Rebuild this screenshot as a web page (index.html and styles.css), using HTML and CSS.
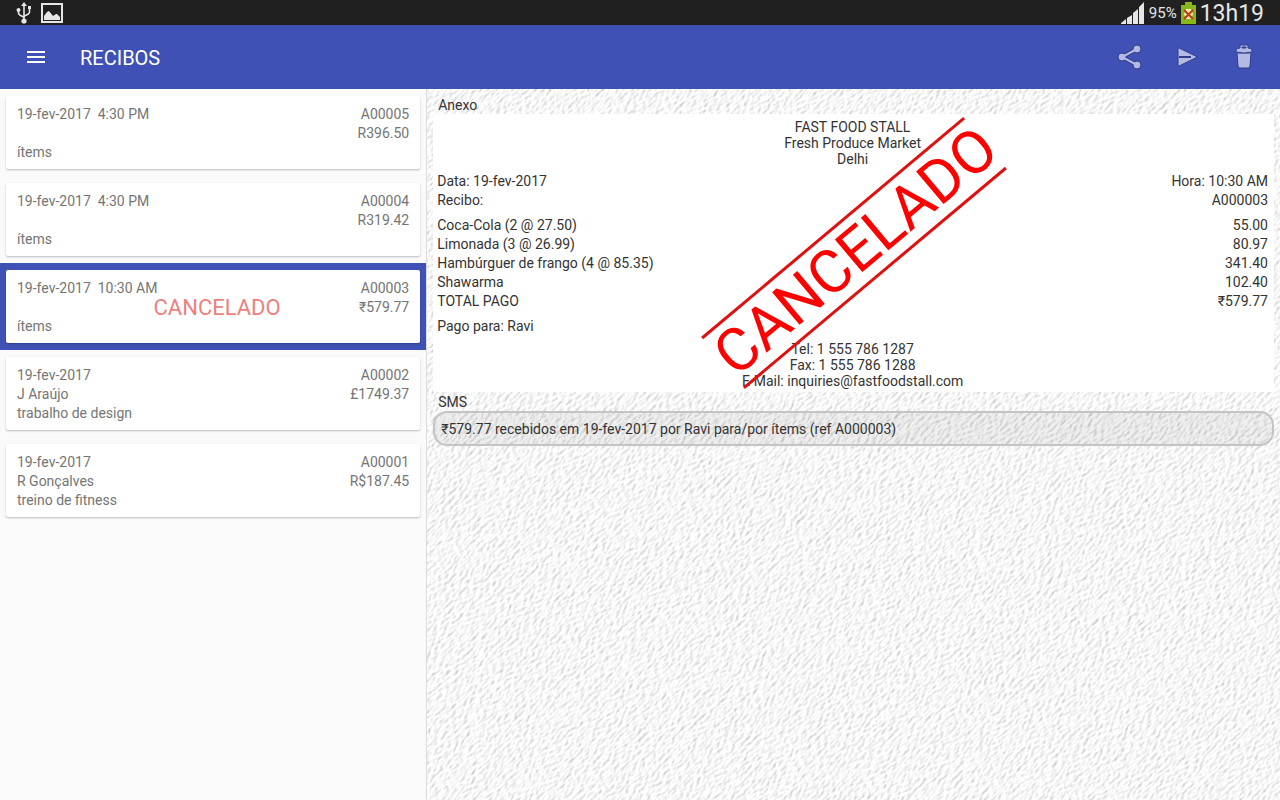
FILE: index.html
```html
<!DOCTYPE html>
<html lang="pt">
<head>
  <meta charset="UTF-8">
  <meta name="viewport" content="width=device-width, initial-scale=1.0">
  <title>Recibos</title>
  <link rel="stylesheet" href="styles.css">
</head>
<body>
  <div class="status-bar">
    <div class="status-group">
      <svg width="16" height="22" viewBox="0 0 16 22" fill="none" stroke="#e6e6e6" stroke-width="1.6">
        <path d="M8 4v14M2.5 8v3c0 3 5.5 3 5.5 5M13.5 7v3c0 3-5.500 3-5.500 5"/>
        <path d="M8 0l3 4H5zM12 4h3v3h-3z" fill="#e6e6e6" stroke="none"/>
        <circle cx="2.500" cy="8" r="2" fill="#e6e6e6" stroke="none"/>
        <circle cx="8" cy="19" r="2.600" fill="#e6e6e6" stroke="none"/>
      </svg>
      <svg width="22" height="20" viewBox="0 0 22 20">
        <rect x="1" y="1" width="20" height="18" fill="none" stroke="#e6e6e6" stroke-width="2"/>
        <path d="M3 17v-4l3-4 2-1 4 5 3-2h1l3 3v3z" fill="#e6e6e6"/>
      </svg>
    </div>
    <div class="status-group status-right">
      <svg width="24" height="22" viewBox="0 0 24 22" fill="#e6e6e6">
        <path d="M0 22v-1l5-4v5zM6 22v-6l5-3v9zM12 22V11l5-4v15zM18 22V5l5-5v22z"/>
      </svg>
      <span class="battery-level">95%</span>
      <svg width="15" height="22" viewBox="0 0 15 22">
        <path d="M0 3h4V0h7v3h4v19H0z" fill="#86b81b"/>
        <path d="M5 7h5l2 5-2 5H5l-2-5z" fill="#f5e9b8"/>
        <path d="M3 8l9 9M12 8l-9 9" stroke="#c03a12" stroke-width="2"/>
      </svg>
      <span class="clock">13h19</span>
    </div>
  </div>

  <header class="app-bar">
    <button class="icon-button" aria-label="Menu">
      <svg width="18" height="12" viewBox="0 0 18 12" fill="#ffffff">
        <path d="M0 0h18v2H0zM0 5h18v2H0zM0 10h18v2H0z"/>
      </svg>
    </button>
    <h1>RECIBOS</h1>
    <div class="actions">
      <button class="icon-button" aria-label="Compartilhar">
        <svg width="26" height="26" viewBox="0 0 26 26">
          <path d="M20 5L5 13l15 8" fill="none" stroke="#303c8c" stroke-width="4"/>
          <g fill="#b4bae4" stroke="#303c8c" stroke-width="1">
            <circle cx="20" cy="5" r="4"/>
            <circle cx="5" cy="13" r="4"/>
            <circle cx="20" cy="21" r="4"/>
          </g>
          <path d="M20 5L5 13l15 8" fill="none" stroke="#b4bae4" stroke-width="2"/>
        </svg>
      </button>
      <button class="icon-button" aria-label="Enviar">
        <svg width="22" height="22" viewBox="0 0 22 22">
          <path d="M2 1.500L21.500 11 2 20.500z" fill="#b4bae4" stroke="#303c8c" stroke-width="1"/>
          <path d="M3 11h12" stroke="#303c8c" stroke-width="2"/>
        </svg>
      </button>
      <button class="icon-button" aria-label="Excluir">
        <svg width="18" height="26" viewBox="0 0 18 26" fill="#b4bae4" stroke="#303c8c" stroke-width="1">
          <path d="M2 9h14l-1 13q0 2-2 2H5q-2 0-2-2z"/>
          <path d="M1 8V6q1-2 4-2V1h8v3q3 0 4 2v2q-8 2-16 0zM7 4h4V3H7z" fill-rule="evenodd"/>
        </svg>
      </button>
    </div>
  </header>

  <main class="content">
    <ul class="receipt-list">
      <li class="list-item">
        <button class="card">
          <span class="card-row"><span>19-fev-2017&nbsp; 4:30 PM</span><span>A00005</span></span>
          <span class="card-row"><span></span><span>R396.50</span></span>
          <span class="card-row"><span>ítems</span></span>
        </button>
      </li>
      <li class="list-item">
        <button class="card">
          <span class="card-row"><span>19-fev-2017&nbsp; 4:30 PM</span><span>A00004</span></span>
          <span class="card-row"><span></span><span>R319.42</span></span>
          <span class="card-row"><span>ítems</span></span>
        </button>
      </li>
      <li class="list-item selected">
        <button class="card">
          <span class="card-row"><span>19-fev-2017&nbsp; 10:30 AM</span><span>A00003</span></span>
          <span class="card-row"><span></span><span>₹579.77</span></span>
          <span class="card-row"><span>ítems</span></span>
          <span class="card-stamp">CANCELADO</span>
        </button>
      </li>
      <li class="list-item">
        <button class="card">
          <span class="card-row"><span>19-fev-2017</span><span>A00002</span></span>
          <span class="card-row"><span>J Araújo</span><span>£1749.37</span></span>
          <span class="card-row"><span>trabalho de design</span></span>
        </button>
      </li>
      <li class="list-item">
        <button class="card">
          <span class="card-row"><span>19-fev-2017</span><span>A00001</span></span>
          <span class="card-row"><span>R Gonçalves</span><span>R$187.45</span></span>
          <span class="card-row"><span>treino de fitness</span></span>
        </button>
      </li>
    </ul>

    <section class="detail">
      <!-- rough paper background -->
      <svg class="paper" width="100%" height="100%" aria-hidden="true">
        <filter id="paper" x="0" y="0" width="100%" height="100%" color-interpolation-filters="sRGB">
          <feTurbulence type="fractalNoise" baseFrequency="0.18 0.36" numOctaves="4" seed="4" result="noise"/>
          <feDiffuseLighting in="noise" surfaceScale="0.6" diffuseConstant="1.150" lighting-color="#ffffff">
            <feDistantLight azimuth="250" elevation="58"/>
          </feDiffuseLighting>
        </filter>
        <g transform="rotate(-45)">
          <rect x="-800" y="-100" width="2000" height="1600" filter="url(#paper)"/>
        </g>
      </svg>

      <h2>Anexo</h2>
      <div class="receipt">
        <div class="centered">
          <p>FAST FOOD STALL</p>
          <p>Fresh Produce Market</p>
          <p>Delhi</p>
        </div>
        <table>
          <tr><td>Data: 19-fev-2017</td><td>Hora: 10:30 AM</td></tr>
          <tr><td>Recibo:</td><td>A000003</td></tr>
        </table>
        <table>
          <tr><td>Coca-Cola (2 @ 27.50)</td><td>55.00</td></tr>
          <tr><td>Limonada (3 @ 26.99)</td><td>80.97</td></tr>
          <tr><td>Hambúrguer de frango (4 @ 85.35)</td><td>341.40</td></tr>
          <tr><td>Shawarma</td><td>102.40</td></tr>
          <tr><td>TOTAL PAGO</td><td>₹579.77</td></tr>
        </table>
        <p class="paid-by">Pago para: Ravi</p>
        <div class="centered">
          <p>Tel: 1 555 786 1287</p>
          <p>Fax: 1 555 786 1288</p>
          <p>E-Mail: inquiries@fastfoodstall.com</p>
        </div>
        <div class="stamp"><span>CANCELADO</span></div>
      </div>
      <h2>SMS</h2>
      <p class="sms">₹579.77 recebidos em 19-fev-2017 por Ravi para/por ítems (ref A000003)</p>
    </section>
  </main>
</body>
</html>
```

FILE: styles.css
```css
* {
  box-sizing: border-box;
}

body {
  margin: 0;
  min-height: 100vh;
  display: flex;
  flex-direction: column;
  font-family: Roboto, "Noto Sans", sans-serif;
  font-size: 14px;
  line-height: 19px;
  color: #333333;
  background-color: #fafafa;
}

h1, h2, p, ul {
  margin: 0;
  padding: 0;
}

button {
  border: none;
  font: inherit;
  cursor: pointer;
}

.status-bar {
  display: flex;
  align-items: center;
  justify-content: space-between;
  height: 25px;
  padding: 0 16px;
  background-color: #202020;
  color: #e6e6e6;
}

.status-group {
  display: flex;
  align-items: center;
  gap: 9px;
}

.status-right {
  gap: 4px;
}

.battery-level {
  padding-top: 1px;
  font-size: 15px;
}

.clock {
  padding-top: 2px;
  font-size: 23px;
  line-height: 23px;
}

.app-bar {
  display: flex;
  align-items: center;
  height: 64px;
  padding: 0 12px;
  background-color: #3f51b5;
}

.app-bar h1 {
  margin-left: 20px;
  padding-top: 2px;
  font-size: 20px;
  font-weight: 400;
  line-height: 24px;
  color: #ffffff;
}

.icon-button {
  display: flex;
  align-items: center;
  justify-content: center;
  width: 48px;
  height: 48px;
  padding: 0;
  background: none;
}

.actions {
  display: flex;
  gap: 9px;
  margin-left: auto;
}

.content {
  flex: 1;
  display: grid;
  grid-template-columns: 33.3% 1fr;
}

.receipt-list {
  list-style: none;
}

.list-item {
  padding: 7px 6px;
}

.list-item.selected {
  background-color: #3f51b5;
}

.card {
  position: relative;
  display: block;
  width: 100%;
  padding: 9px 11px 7px;
  background-color: #ffffff;
  border-radius: 2px;
  box-shadow: 0 1px 2px rgba(0, 0, 0, 0.25);
  color: #757575;
  text-align: left;
}

.card-row {
  display: flex;
  justify-content: space-between;
  height: 19px;
}

.card-stamp {
  position: absolute;
  inset: 0;
  display: flex;
  align-items: center;
  justify-content: center;
  padding: 2px 0 0 8px;
  font-size: 22px;
  color: #ee7f7f;
}

.detail {
  position: relative;
  z-index: 0;
  padding: 7px 6px;
  border-left: 1px solid #dcdcdc;
  overflow: hidden;
}

.paper {
  position: absolute;
  inset: 0;
  z-index: -1;
}

.detail h2 {
  padding-left: 5px;
  font-size: 14px;
  font-weight: 400;
  line-height: 18px;
}

.receipt {
  position: relative;
  display: flex;
  flex-direction: column;
  gap: 5px;
  margin-bottom: 1px;
  padding: 5px 6px 3px 4px;
  background-color: #ffffff;
}

.centered {
  text-align: center;
  line-height: 16px;
}

.receipt table {
  width: 100%;
  margin-bottom: 1px;
  border-collapse: collapse;
}

.receipt td {
  padding: 0;
}

.receipt td:last-child {
  text-align: right;
}

.stamp {
  position: absolute;
  inset: 0;
  display: flex;
  align-items: center;
  justify-content: center;
}

.stamp span {
  width: 342px;
  border-top: 3px solid #e01010;
  border-bottom: 3px solid #e01010;
  font-size: 60px;
  line-height: 62px;
  text-align: center;
  color: #ff0000;
  transform: rotate(-40deg);
}

.sms {
  padding: 7px 6px 5px;
  border: 2px solid #c4c4c4;
  border-radius: 14px;
  background-color: rgba(0, 0, 0, 0.06);
}
```
